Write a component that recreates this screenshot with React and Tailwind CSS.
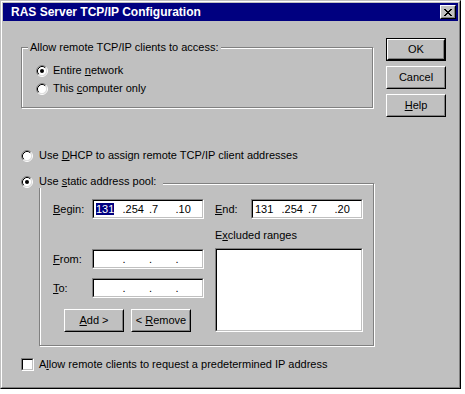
import React from 'react';

const X_ROWS = ['11000011', '01100110', '00111100', '00011000', '00111100', '01100110', '11000011'];

function CloseGlyph() {
  const rects = [];
  X_ROWS.forEach((row, y) => {
    row.split('').forEach((c, x) => {
      if (c === '1') rects.push(<rect key={`${x}-${y}`} x={x} y={y} width="1" height="1" fill="#000" />);
    });
  });
  return (
    <svg width="8" height="7" viewBox="0 0 8 7" shapeRendering="crispEdges" className="block">
      {rects}
    </svg>
  );
}

function Radio({ checked }) {
  return (
    <svg width="12" height="12" viewBox="0 0 12 12" className="shrink-0">
      <circle cx="6" cy="6" r="4.5" fill="#fff" />
      <path d="M9.89 2.11 A5.5 5.5 0 0 0 2.11 9.89" stroke="#808080" strokeWidth="1" fill="none" />
      <path d="M2.11 9.89 A5.5 5.5 0 0 0 9.89 2.11" stroke="#fff" strokeWidth="1" fill="none" />
      <path d="M9.18 2.82 A4.5 4.5 0 0 0 2.82 9.18" stroke="#000" strokeWidth="1" fill="none" />
      <path d="M2.82 9.18 A4.5 4.5 0 0 0 9.18 2.82" stroke="#dfdfdf" strokeWidth="1" fill="none" />
      {checked && <circle cx="6" cy="6" r="2" fill="#000" />}
    </svg>
  );
}

function Sunken({ className = '', children }) {
  return (
    <div className={`border border-t-[#808080] border-l-[#808080] border-r-white border-b-white ${className}`}>
      <div className="h-full w-full border border-t-black border-l-black border-r-[#c0c0c0] border-b-[#c0c0c0] bg-white">
        {children}
      </div>
    </div>
  );
}

function Btn({ children, isDefault = false, className = '' }) {
  const inner = (
    <div className="h-full w-full border border-t-white border-l-white border-r-black border-b-black bg-[#c0c0c0]">
      <div className="flex h-full w-full items-center justify-center border border-t-[#c0c0c0] border-l-[#c0c0c0] border-r-[#808080] border-b-[#808080]">
        {children}
      </div>
    </div>
  );
  if (isDefault) {
    return <div className={`border border-black bg-[#c0c0c0] ${className}`}>{inner}</div>;
  }
  return <div className={`shrink-0 ${className}`}>{inner}</div>;
}

function U({ children }) {
  return <span className="underline underline-offset-[1px]">{children}</span>;
}

function IpField({ parts, highlightFirst = false }) {
  return (
    <Sunken className="h-[20px] w-[112px]">
      <div className="flex h-full items-center pl-[2px]">
        {parts.map((p, i) => (
          <div key={i} className="w-[27px] whitespace-pre">
            {i === 0 && highlightFirst ? (
              <span className="bg-[#000080] text-white">{p}</span>
            ) : (
              p
            )}
          </div>
        ))}
      </div>
    </Sunken>
  );
}

function Group({ className = '', children }) {
  return (
    <div className={`relative border border-[#808080] shadow-[inset_1px_1px_0_#fff,1px_1px_0_#fff] ${className}`}>
      {children}
    </div>
  );
}

export default function App() {
  return (
    <div className="h-[394px] w-[465px] bg-white font-['Liberation_Sans',Arial,sans-serif] text-[11px] leading-[13px] text-black">
      <div className="h-[389px] w-[461px] border border-t-[#c0c0c0] border-l-[#c0c0c0] border-r-black border-b-black">
        <div className="h-full w-full border border-t-white border-l-white border-r-[#808080] border-b-[#808080] bg-[#c0c0c0] p-px">
          {/* Title bar */}
          <div className="flex h-[18px] items-center justify-between bg-[#000080] pl-[8px] pr-[2px]">
            <span className="text-[12px] font-bold leading-[14px] text-white">RAS Server TCP/IP Configuration</span>
            <Btn className="h-[14px] w-[16px]">
              <CloseGlyph />
            </Btn>
          </div>

          {/* Body */}
          <div className="flex pl-[18px]">
            <div className="flex w-[352px] flex-col">
              {/* Group 1 */}
              <Group className="mt-[26px] h-[61px]">
                <span className="absolute -top-[7px] left-[6px] bg-[#c0c0c0] px-[2px]">
                  Allow remote TCP/IP clients to access:
                </span>
                <div className="flex flex-col gap-[5px] pl-[14px] pt-[16px]">
                  <div className="flex h-[13px] items-center">
                    <Radio checked />
                    <span className="ml-[5px]">
                      Entire <U>n</U>etwork
                    </span>
                  </div>
                  <div className="flex h-[13px] items-center">
                    <Radio />
                    <span className="ml-[5px]">
                      This <U>c</U>omputer only
                    </span>
                  </div>
                </div>
              </Group>

              {/* DHCP */}
              <div className="mt-[41px] flex h-[13px] items-center">
                <Radio />
                <span className="ml-[6px]">
                  Use <U>D</U>HCP to assign remote TCP/IP client addresses
                </span>
              </div>

              {/* Static group */}
              <Group className="ml-[18px] mt-[21px] h-[163px] w-[335px]">
                <div className="absolute -left-[19px] -top-[9px] flex h-[13px] items-center bg-[#c0c0c0] pr-[7px]">
                  <Radio checked />
                  <span className="ml-[6px]">
                    Use <U>s</U>tatic address pool:
                  </span>
                </div>

                {/* Begin / End row */}
                <div className="mt-[15px] flex items-center pl-[13px]">
                  <span className="w-[39px]">
                    <U>B</U>egin:
                  </span>
                  <IpField parts={['131', '.254', '.7', '.10']} highlightFirst />
                  <span className="ml-[11px] w-[36px]">
                    <U>E</U>nd:
                  </span>
                  <IpField parts={['131', '.254', '.7', '.20']} />
                </div>

                <div className="flex">
                  <div className="flex flex-col pl-[13px]">
                    <div className="mt-[30px] flex items-center">
                      <span className="w-[39px]">
                        <U>F</U>rom:
                      </span>
                      <IpField parts={['', '.', '.', '.']} />
                    </div>
                    <div className="mt-[9px] flex items-center">
                      <span className="w-[39px]">
                        <U>T</U>o:
                      </span>
                      <IpField parts={['', '.', '.', '.']} />
                    </div>
                    <div className="mt-[11px] flex pl-[11px]">
                      <Btn className="h-[23px] w-[60px]">
                        <span>
                          <U>A</U>dd &gt;
                        </span>
                      </Btn>
                      <Btn className="ml-[7px] h-[23px] w-[60px]">
                        <span>
                          &lt; <U>R</U>emove
                        </span>
                      </Btn>
                    </div>
                  </div>
                  <div className="ml-[11px] flex flex-col">
                    <span className="mt-[10px]">
                      E<U>x</U>cluded ranges
                    </span>
                    <Sunken className="mt-[6px] h-[84px] w-[148px]" />
                  </div>
                </div>
              </Group>

              {/* Checkbox */}
              <div className="mt-[12px] flex h-[13px] items-center">
                <Sunken className="h-[13px] w-[13px] shrink-0" />
                <span className="ml-[5px]">
                  A<U>l</U>low remote clients to request a predetermined IP address
                </span>
              </div>
            </div>

            {/* Buttons */}
            <div className="ml-[13px] mt-[17px] flex flex-col gap-[5px]">
              <Btn isDefault className="h-[23px] w-[60px]">
                <span>OK</span>
              </Btn>
              <Btn className="h-[23px] w-[60px]">
                <span>Cancel</span>
              </Btn>
              <Btn className="h-[23px] w-[60px]">
                <span>
                  <U>H</U>elp
                </span>
              </Btn>
            </div>
          </div>
        </div>
      </div>
    </div>
  );
}
